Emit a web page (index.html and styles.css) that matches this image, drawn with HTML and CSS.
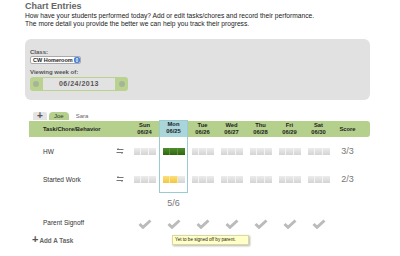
FILE: index.html
```html
<!DOCTYPE html>
<html>
<head>
    <title>Chart Entries</title>
    <link rel="stylesheet" href="styles.css">
</head>
<body>
    <div class="page">
        <h1 class="title">Chart Entries</h1>
        <p class="intro">How have your students performed today? Add or edit tasks/chores and record their performance.<br>The more detail you provide the better we can help you track their progress.</p>

        <div class="filters">
            <div class="field-label">Class:</div>
            <div class="select">
                <span class="select-text">CW Homeroom</span>
                <span class="select-arrow">
                    <svg width="4" height="6" viewBox="0 0 4 6"><path d="M0.5 2.5 L2 0.8 L3.5 2.5 Z M0.5 3.5 L2 5.2 L3.5 3.5 Z" fill="#fff"/></svg>
                </span>
            </div>
            <div class="field-label week-label">Viewing week of:</div>
            <div class="week-picker">
                <span class="nav-dot"></span>
                <span class="week-date">06/24/2013</span>
                <span class="nav-dot"></span>
            </div>
        </div>

        <div class="tabs">
            <span class="tab-add">+</span>
            <span class="tab active">Joe</span>
            <span class="tab">Sara</span>
        </div>

        <div class="chart">
            <div class="head-bar"></div>
            <div class="today-frame"></div>

            <div class="head-cell task-head">Task/Chore/Behavior</div>
            <div class="head-cell day" style="grid-column: 2">Sun<br>06/24</div>
            <div class="head-cell day today-head" style="grid-column: 3">Mon<br>06/25</div>
            <div class="head-cell day" style="grid-column: 4">Tue<br>06/26</div>
            <div class="head-cell day" style="grid-column: 5">Wed<br>06/27</div>
            <div class="head-cell day" style="grid-column: 6">Thu<br>06/28</div>
            <div class="head-cell day" style="grid-column: 7">Fri<br>06/29</div>
            <div class="head-cell day" style="grid-column: 8">Sat<br>06/30</div>
            <div class="head-cell day" style="grid-column: 9">Score</div>
        </div>

        <div class="add-task"><span class="plus">+</span>Add A Task</div>

        <div class="tooltip">Yet to be signed off by parent.</div>
    </div>

    <script>
        const tasks = [
            { name: 'HW', fill: [0, 3, 0, 0, 0, 0, 0], color: 'green', score: '3/3' },
            { name: 'Started Work', fill: [0, 2, 0, 0, 0, 0, 0], color: 'yellow', score: '2/3' }
        ];

        const chart = document.querySelector('.chart');
        const swapIcon = '<svg width="8" height="6" viewBox="0 0 8 6"><path d="M1 1.5 H7.5 M1 1.5 L2.6 0.2 M0.5 4.5 H7 M7 4.5 L5.4 5.8" stroke="#777" stroke-width="1" fill="none"/></svg>';
        const check = '<svg width="14" height="10" viewBox="0 0 14 10"><path d="M1.5 5 L5 8.3 L12.5 1.5" stroke="#bbb" stroke-width="3" fill="none"/></svg>';

        function cell(html, cls, col, row) {
            const el = document.createElement('div');
            el.className = cls;
            el.style.gridColumn = col;
            el.style.gridRow = row;
            el.innerHTML = html;
            chart.appendChild(el);
        }

        tasks.forEach(function (task, t) {
            const row = t + 2;
            cell('<span>' + task.name + '</span>' + swapIcon, 'task-name', 1, row);
            task.fill.forEach(function (n, i) {
                let bar = '<div class="bar">';
                for (let s = 0; s < 3; s++) {
                    bar += '<span class="seg' + (s < n ? ' ' + task.color : '') + '"></span>';
                }
                bar += '</div>';
                cell(bar, 'day-cell', i + 2, row);
            });
            cell(task.score, 'score', 9, row);
        });

        cell('5/6', 'total', 3, 4);

        cell('Parent Signoff', 'task-name signoff', 1, 5);
        for (let i = 0; i < 7; i++) {
            cell(check, 'check', i + 2, 5);
        }
    </script>
</body>
</html>
```

FILE: styles.css
```css
body {
    margin: 0;
    padding: 0;
    background-color: #fff;
    font-family: "Liberation Sans", Arial, sans-serif;
    color: #222;
}

.page {
    position: relative;
    padding-left: 25px;
    width: 345px;
    height: 256px;
    overflow: hidden;
}

.title {
    margin: 0;
    font-size: 9px;
    line-height: 12px;
    font-weight: bold;
    color: #666;
}

.intro {
    margin: 0;
    font-size: 6.7px;
    line-height: 8px;
    color: #222;
}

.filters {
    margin-top: 11px;
    background-color: #e1e1e1;
    border-radius: 6px;
    padding: 9px 5px 8px 5px;
    height: 44px;
}

.field-label {
    font-size: 6px;
    line-height: 8px;
    font-weight: bold;
    color: #555;
}

.week-label {
    margin-top: 4px;
}

.select {
    display: flex;
    align-items: center;
    justify-content: space-between;
    width: 51px;
    height: 8px;
    box-sizing: border-box;
    background-color: #fff;
    border: 1px solid #aaa;
    border-radius: 2px;
    padding-left: 2px;
}

.select-text {
    font-size: 5.5px;
    font-weight: bold;
    color: #222;
}

.select-arrow {
    display: flex;
    align-items: center;
    justify-content: center;
    width: 6px;
    height: 6px;
    background-color: #4a7fd6;
    border-radius: 2px;
}

.week-picker {
    display: flex;
    align-items: center;
    width: 98px;
    height: 14px;
    margin-top: 1px;
    background-color: #b9d38e;
    border-radius: 3px;
    box-sizing: border-box;
    padding: 1px 2px;
}

.nav-dot {
    width: 6px;
    height: 6px;
    border-radius: 50%;
    background-color: #a8b49a;
    margin: 0 1px;
}

.week-date {
    flex: 1;
    height: 12px;
    margin: 0 3px;
    background-color: #e2e2e2;
    text-align: center;
    font-size: 7px;
    line-height: 12px;
    font-weight: bold;
    letter-spacing: 0.5px;
    color: #555;
}

.tabs {
    display: flex;
    align-items: stretch;
    margin-top: 12px;
    margin-left: 8px;
    height: 8px;
    margin-bottom: 1px;
}

.tab-add {
    width: 14px;
    background-color: #e4e4e4;
    border-radius: 2px 2px 0 0;
    text-align: center;
    font-size: 10px;
    line-height: 8px;
    font-weight: bold;
    color: #555;
}

.tab {
    padding: 0 5px;
    margin-left: 2px;
    font-size: 6px;
    line-height: 8px;
    color: #666;
    border-radius: 4px 4px 0 0;
}

.tab.active {
    background-color: #b5cf8d;
    color: #333;
}

.chart {
    display: grid;
    grid-template-columns: 101px repeat(7, 29px) 29px 8px;
    grid-template-rows: 16px 28px 28px 20px 20px;
    margin-left: 4px;
}

.head-bar {
    grid-column: 1 / 11;
    grid-row: 1;
    background-color: #b5cf8d;
    border-radius: 0 3px 3px 0;
}

.today-frame {
    grid-column: 3;
    grid-row: 1 / 4;
    margin-top: -1.5px;
    border: 1px solid #99cbd0;
    z-index: 2;
}

.head-cell {
    grid-row: 1;
    font-size: 5.8px;
    line-height: 7px;
    font-weight: bold;
    color: #222;
    z-index: 1;
}

.task-head {
    grid-column: 1;
    padding-left: 14px;
    align-self: center;
}

.day {
    text-align: center;
    align-self: stretch;
    display: flex;
    align-items: center;
    justify-content: center;
}

.today-head {
    background-color: #a9d5db;
    margin-top: -1.5px;
}

.task-name {
    display: flex;
    align-items: center;
    justify-content: space-between;
    padding: 0 6px 0 14px;
    font-size: 6.5px;
    color: #333;
}

.signoff {
    align-self: start;
    height: 18px;
}

.day-cell {
    display: flex;
    align-items: center;
    justify-content: center;
}

.bar {
    display: flex;
    width: 22px;
    height: 7px;
}

.seg {
    flex: 1;
    background: linear-gradient(#ececec, #d4d4d4);
    border-right: 1px solid #f4f4f4;
}

.seg:last-child {
    border-right: none;
}

.seg.green {
    background: linear-gradient(#4f8d2a, #2f6512);
    border-right-color: #5c9636;
}

.seg.yellow {
    background: linear-gradient(#fbe07c, #f3c63f);
    border-right-color: #fbe9a8;
}

.score {
    display: flex;
    align-items: center;
    justify-content: center;
    font-size: 9px;
    color: #777;
}

.total {
    display: flex;
    align-items: center;
    justify-content: center;
    font-size: 9px;
    color: #777;
}

.check {
    display: flex;
    align-items: flex-start;
    justify-content: center;
    padding-top: 6px;
}

.add-task {
    display: flex;
    align-items: center;
    margin-left: 7px;
    height: 14px;
    font-size: 6.3px;
    font-weight: bold;
    color: #666;
}

.add-task .plus {
    font-size: 11px;
    color: #555;
    margin-right: 1px;
    margin-top: -3px;
}

.tooltip {
    position: absolute;
    left: 172px;
    top: 235px;
    width: 77px;
    height: 10px;
    box-sizing: border-box;
    background-color: #ffffc6;
    border: 1px solid #d8d8a0;
    box-shadow: 1px 1px 2px rgba(0, 0, 0, 0.3);
    font-size: 4.6px;
    line-height: 8px;
    padding-left: 2px;
    color: #222;
    white-space: nowrap;
}
```
